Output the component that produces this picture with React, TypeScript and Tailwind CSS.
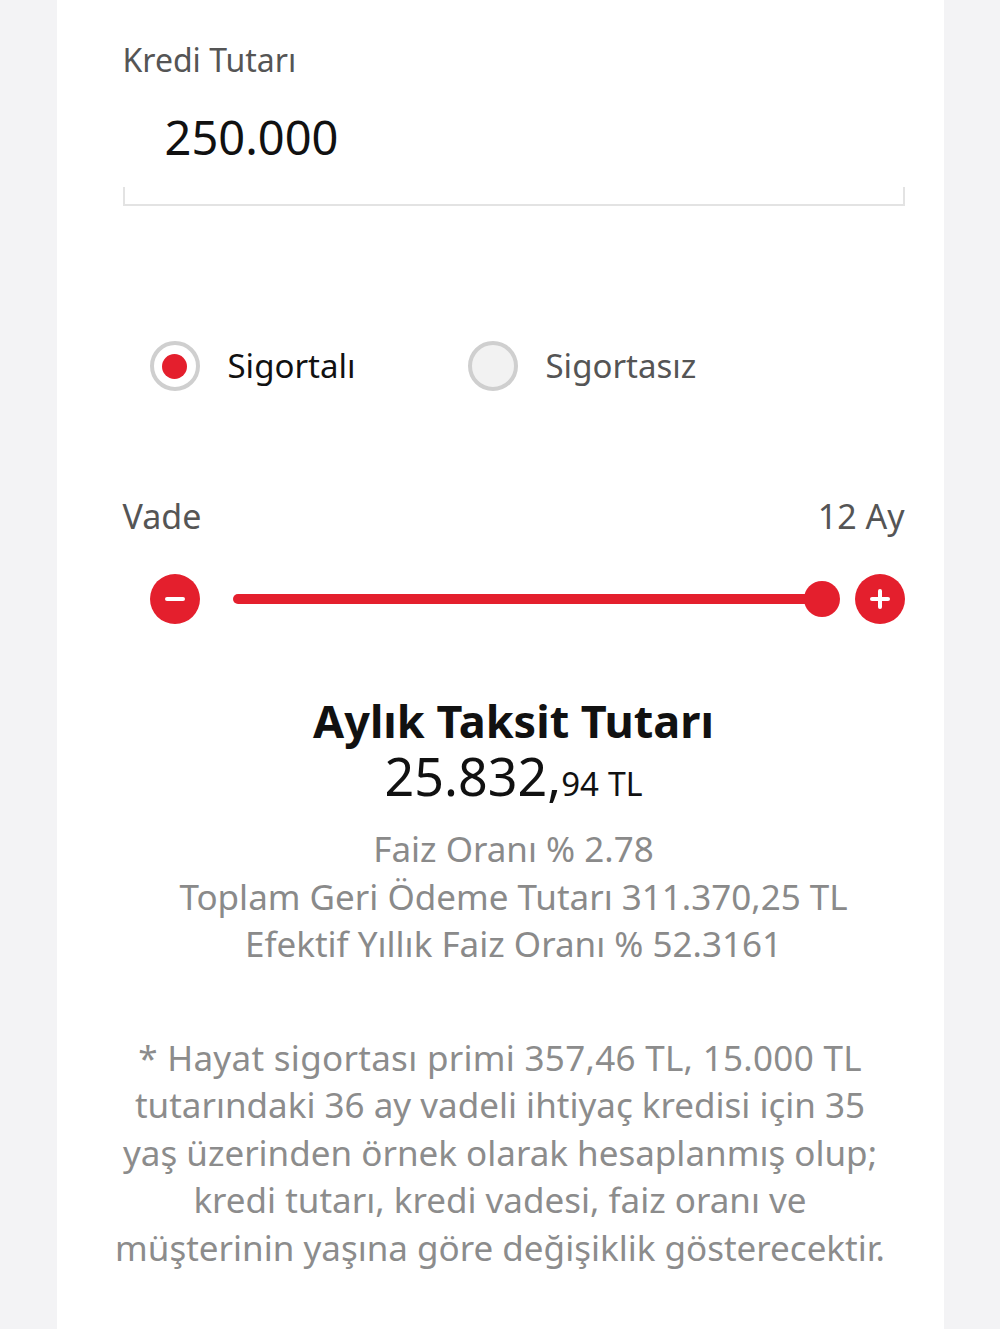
import React from "react";

const font = { fontFamily: '"Noto Sans", "Open Sans", sans-serif' };

function Radio({ checked }: { checked: boolean }) {
  return (
    <span
      className={
        "flex h-[50px] w-[50px] shrink-0 items-center justify-center rounded-full border-[4px] border-[#cfcfcf] " +
        (checked ? "bg-white" : "bg-[#f2f2f2]")
      }
    >
      {checked && <span className="h-[25px] w-[25px] rounded-full bg-[#e41f2d]" />}
    </span>
  );
}

function RoundButton({ sign }: { sign: "minus" | "plus" }) {
  return (
    <span className="flex h-[50px] w-[50px] shrink-0 items-center justify-center rounded-full bg-[#e41f2d]">
      <svg width="22" height="22" viewBox="0 0 22 22">
        <line x1="3" y1="11" x2="19" y2="11" stroke="white" strokeWidth="4" strokeLinecap="round" />
        {sign === "plus" && (
          <line x1="11" y1="3" x2="11" y2="19" stroke="white" strokeWidth="4" strokeLinecap="round" />
        )}
      </svg>
    </span>
  );
}

export default function App() {
  return (
    <div className="min-h-screen bg-[#f3f3f5]" style={font}>
      <div className="mx-auto min-h-[1329px] w-[887px] bg-white">
        <div className="pl-[66px] pr-[39px] pt-[42px]">
          <div className="text-[32px] leading-[36px] text-[#555555]">Kredi Tutarı</div>
          <div className="mt-[31px] pl-[42px] text-[47px] leading-[56px] text-[#111111]">250.000</div>
          <div className="mt-[22px] h-[19px] border-x-2 border-b-2 border-[#e3e3e3]" />

          {/* sigorta secimi */}
          <div className="mt-[135px] flex items-center pl-[27px]">
            <div className="flex w-[318px] items-center gap-[28px]">
              <Radio checked />
              <span className="text-[33px] leading-[40px] text-[#111111]">Sigortalı</span>
            </div>
            <div className="flex items-center gap-[28px]">
              <Radio checked={false} />
              <span className="text-[33px] leading-[40px] text-[#555555]">Sigortasız</span>
            </div>
          </div>

          {/* vade */}
          <div className="mt-[105px] flex items-center justify-between text-[34px] leading-[40px] text-[#555555]">
            <span>Vade</span>
            <span>12 Ay</span>
          </div>
          <div className="mt-[38px] flex items-center pl-[27px]">
            <RoundButton sign="minus" />
            <div className="ml-[33px] flex flex-1 items-center">
              <div className="h-[10px] flex-1 rounded-l-full bg-[#e41f2d]" />
              <div className="-ml-[18px] h-[36px] w-[36px] rounded-full bg-[#e41f2d]" />
            </div>
            <div className="ml-[15px]">
              <RoundButton sign="plus" />
            </div>
          </div>

          {/* sonuc */}
          <div className="mt-[71px] text-center">
            <div className="text-[45px] font-bold leading-[52px] text-[#111111]">Aylık Taksit Tutarı</div>
            <div className="text-[52px] leading-[58px] text-[#111111]">
              25.832,<span className="text-[33px]">94</span>
              <span className="ml-[9px] text-[32px]">TL</span>
            </div>
            <div className="mt-[12px] text-[35px] leading-[47.5px] text-[#8a8a8a]">
              <div>Faiz Oranı % 2.78</div>
              <div>Toplam Geri Ödeme Tutarı 311.370,25 TL</div>
              <div>Efektif Yıllık Faiz Oranı % 52.3161</div>
            </div>
          </div>
        </div>

        <p className="mt-[66px] text-center text-[35px] leading-[47.5px] text-[#8c8c8c]">
          <span className="tracking-[0.3px]">* Hayat sigortası primi 357,46 TL, 15.000 TL</span>
          <br />
          tutarındaki 36 ay vadeli ihtiyaç kredisi için 35
          <br />
          yaş üzerinden örnek olarak hesaplanmış olup;
          <br />
          kredi tutarı, kredi vadesi, faiz oranı ve
          <br />
          müşterinin yaşına göre değişiklik gösterecektir.
        </p>
      </div>
    </div>
  );
}
